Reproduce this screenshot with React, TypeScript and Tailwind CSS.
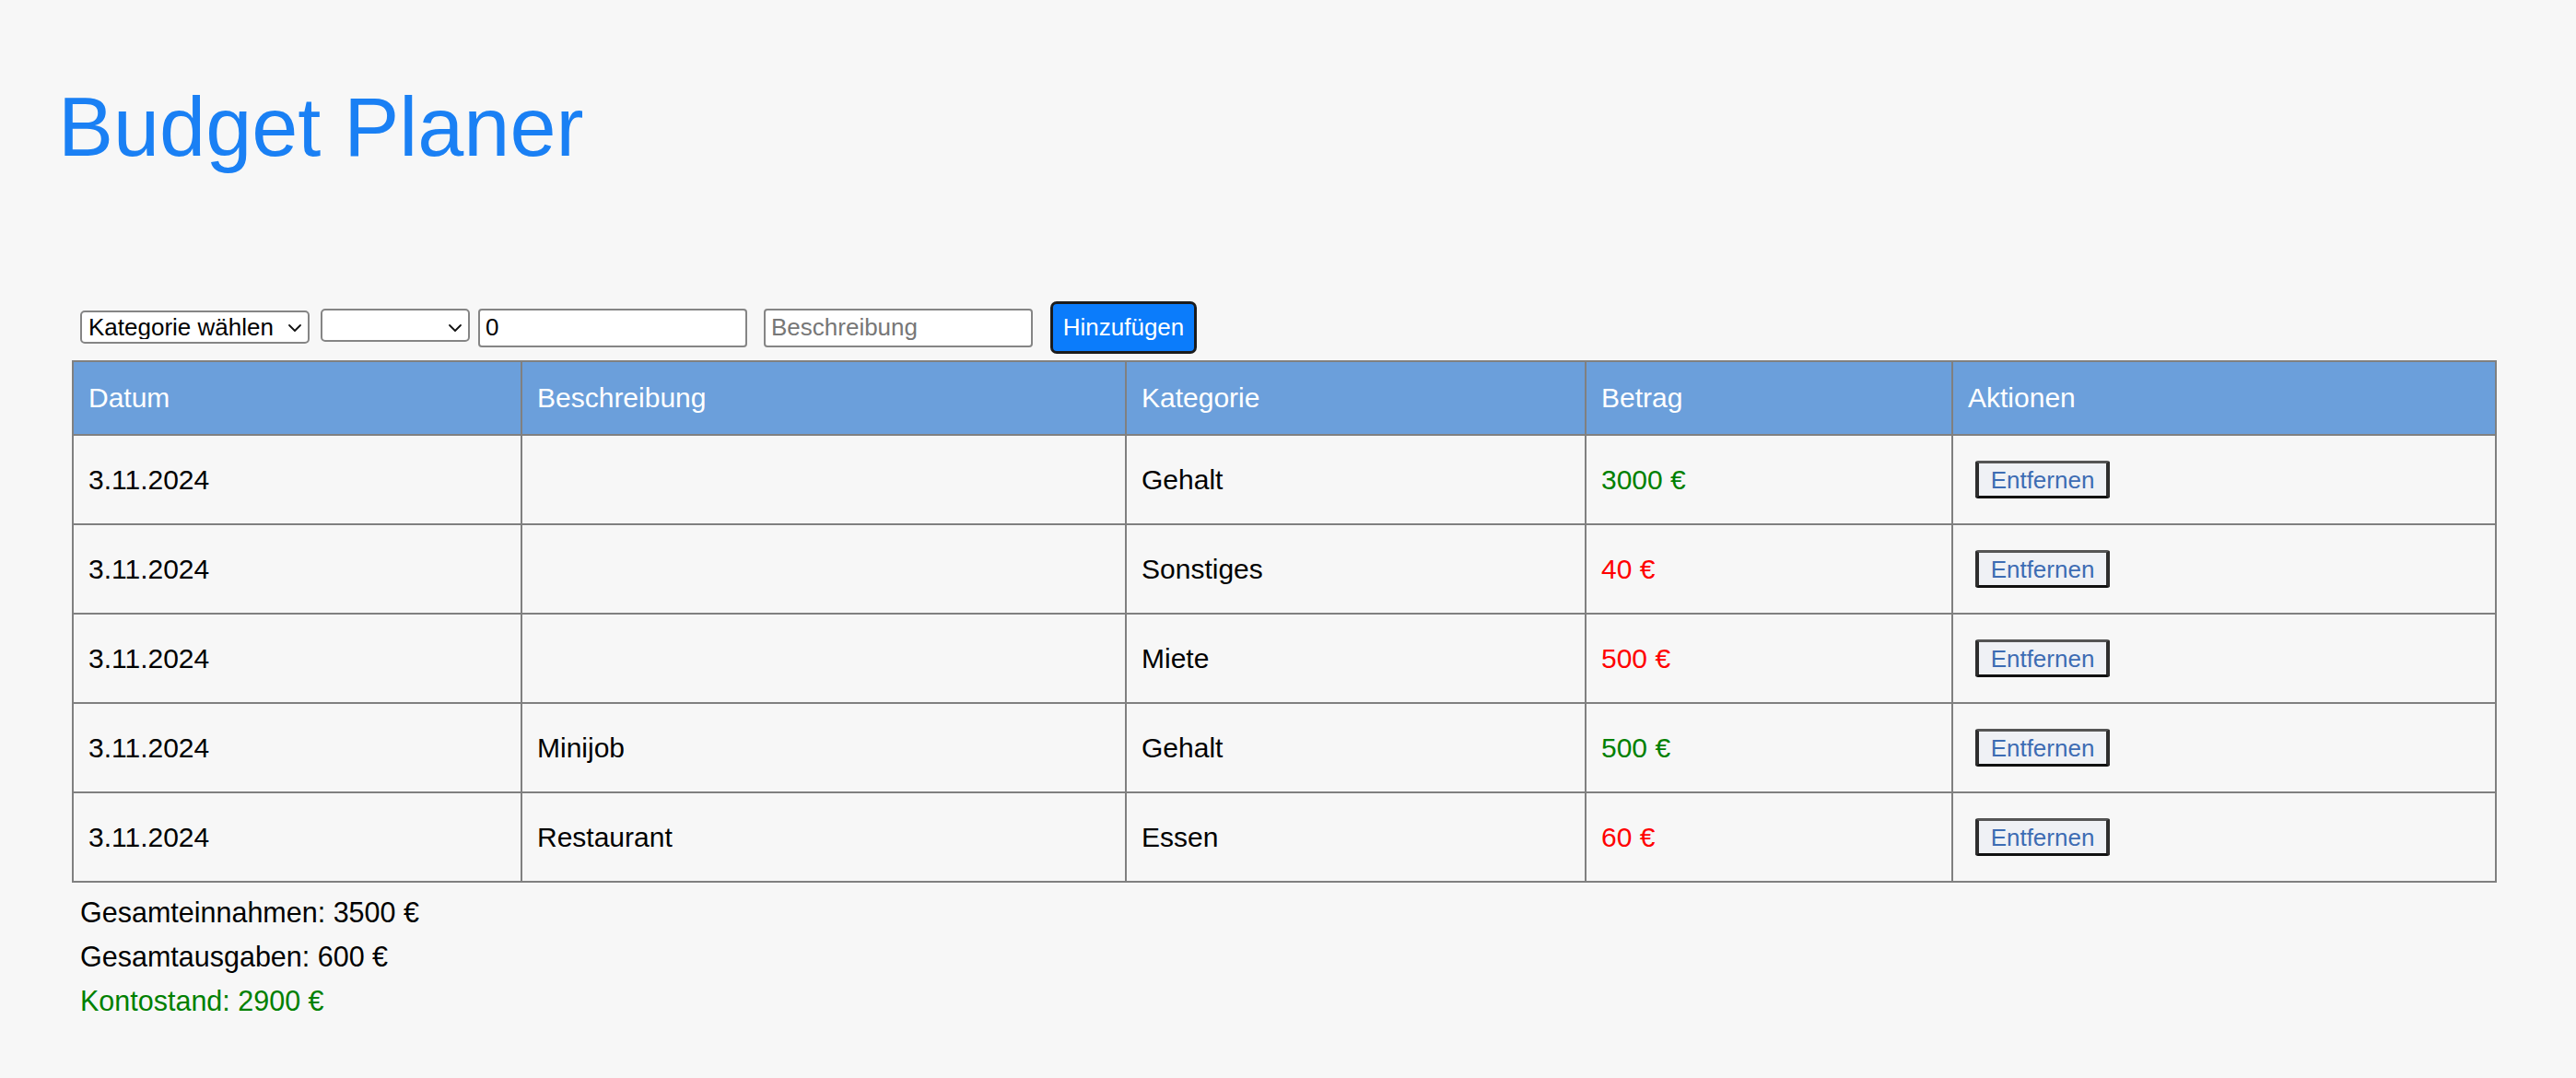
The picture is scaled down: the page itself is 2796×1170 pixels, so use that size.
import React from 'react';

type Entry = {
  date: string;
  description: string;
  category: string;
  amount: number;
  income: boolean;
};

const entries: Entry[] = [
  { date: '3.11.2024', description: '', category: 'Gehalt', amount: 3000, income: true },
  { date: '3.11.2024', description: '', category: 'Sonstiges', amount: 40, income: false },
  { date: '3.11.2024', description: '', category: 'Miete', amount: 500, income: false },
  { date: '3.11.2024', description: 'Minijob', category: 'Gehalt', amount: 500, income: true },
  { date: '3.11.2024', description: 'Restaurant', category: 'Essen', amount: 60, income: false },
];

function Chevron() {
  return (
    <svg
      className="pointer-events-none absolute right-[8px] top-1/2 -translate-y-1/2"
      width="16"
      height="10"
      viewBox="0 0 16 10"
      fill="none"
    >
      <path d="M2 2l6 6 6-6" stroke="#111" strokeWidth="1.8" strokeLinecap="round" strokeLinejoin="round" />
    </svg>
  );
}

export default function App() {
  const income = entries.filter((e) => e.income).reduce((s, e) => s + e.amount, 0);
  const expenses = entries.filter((e) => !e.income).reduce((s, e) => s + e.amount, 0);
  const balance = income - expenses;

  return (
    <div className="min-h-screen w-full bg-[#f7f7f7] font-['Liberation_Sans',Arial,sans-serif] text-black">
      <h1 className="pl-[63px] pt-[93px] text-[90px] leading-none font-normal text-[#1a80f4]">
        Budget Planer
      </h1>

      <div className="pl-[78px]">
        {/* Eingabe */}
        <div className="mt-[144px] mb-[7px] ml-[9px] flex h-[57px] items-center text-[26px]">
          <div className="relative">
            <select className="h-[36px] w-[249px] appearance-none rounded-[5px] border-2 border-[#858585] bg-white pl-[7px] pr-[30px] leading-none text-black outline-none">
              <option>Kategorie wählen</option>
            </select>
            <Chevron />
          </div>
          <div className="relative ml-[12px]">
            <select className="h-[36px] w-[162px] appearance-none rounded-[5px] border-2 border-[#858585] bg-white pl-[7px] pr-[30px] outline-none">
              <option></option>
            </select>
            <Chevron />
          </div>
          <input
            type="text"
            defaultValue="0"
            className="ml-[9px] h-[42px] w-[292px] rounded-[4px] border-2 border-[#858585] bg-white px-[6px] text-black outline-none"
          />
          <input
            type="text"
            placeholder="Beschreibung"
            className="ml-[18px] h-[42px] w-[292px] rounded-[4px] border-2 border-[#858585] bg-white px-[6px] text-black outline-none placeholder:text-[#777]"
          />
          <button className="ml-[19px] h-[57px] w-[159px] rounded-[7px] border-[3px] border-[#1c1c1c] bg-[#0b7cfb] text-white">
            Hinzufügen
          </button>
        </div>

        {/* Tabelle */}
        <table className="w-[2630px] table-fixed border-collapse text-[30px]">
          <colgroup>
            <col className="w-[487px]" />
            <col className="w-[656px]" />
            <col className="w-[499px]" />
            <col className="w-[398px]" />
            <col className="w-[590px]" />
          </colgroup>
          <thead>
            <tr className="bg-[#6b9fdb] text-white">
              {['Datum', 'Beschreibung', 'Kategorie', 'Betrag', 'Aktionen'].map((h) => (
                <th
                  key={h}
                  className="border-2 border-[#808080] px-[16px] py-[22px] text-left font-normal leading-[34px]"
                >
                  {h}
                </th>
              ))}
            </tr>
          </thead>
          <tbody>
            {entries.map((e, i) => (
              <tr key={i}>
                <td className="border-2 border-[#808080] px-[16px] py-[18px] leading-[34px]">{e.date}</td>
                <td className="border-2 border-[#808080] px-[16px] py-[18px] leading-[34px]">{e.description}</td>
                <td className="border-2 border-[#808080] px-[16px] py-[18px] leading-[34px]">{e.category}</td>
                <td
                  className={`border-2 border-[#808080] px-[16px] py-[18px] leading-[34px] ${
                    e.income ? 'text-[#008000]' : 'text-[#ff0000]'
                  }`}
                >
                  {e.amount} €
                </td>
                <td className="border-2 border-[#808080] px-[16px] py-[18px]">
                  <button className="my-[9px] ml-[8px] block h-[41px] w-[146px] rounded-[3px] border-x-[4px] border-y-[3px] border-x-[#2e2e2e] border-t-[#555] border-b-[#111] bg-[#eff1f5] text-[26px] leading-none text-[#3d6cb3]">
                    Entfernen
                  </button>
                </td>
              </tr>
            ))}
          </tbody>
        </table>

        {/* Zusammenfassung */}
        <div className="mt-[8px] ml-[9px] text-[30.5px] leading-[48px]">
          <p>Gesamteinnahmen: {income} €</p>
          <p>Gesamtausgaben: {expenses} €</p>
          <p className={balance >= 0 ? 'text-[#008000]' : 'text-[#ff0000]'}>Kontostand: {balance} €</p>
        </div>
      </div>
    </div>
  );
}
